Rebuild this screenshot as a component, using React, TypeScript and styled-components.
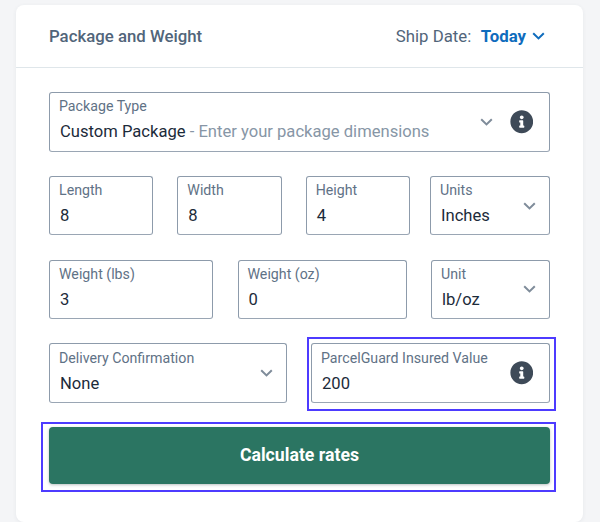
import {FC} from "react";
import styled, {createGlobalStyle} from "styled-components";
import {FaInfoCircle} from "react-icons/fa";

const GlobalStyle = createGlobalStyle`
  html, body {
    margin: 0;
    padding: 0;
    height: 522px;
    overflow: hidden;
    background: #f4f5f7;
    font-family: Roboto, "Liberation Sans", sans-serif;
  }
`;

const Page = styled.div`
  padding: 5px 17px 0 16px;
  height: 517px;
`;

const Card = styled.section`
  height: 516.5px;
  background: #fff;
  border-radius: 8px;
  box-shadow: 0 1px 4px rgba(60, 70, 90, 0.07);
`;

const Header = styled.header`
  height: 62px;
  display: flex;
  align-items: center;
  justify-content: space-between;
  padding: 0 38px 0 33px;
  border-bottom: 1px solid #dfe6ea;
`;

const Title = styled.h2`
  margin: 0;
  font-size: 16.8px;
  font-weight: 500;
  color: #51657a;
`;

const ShipDate = styled.div`
  display: flex;
  align-items: center;
  font-size: 16.8px;
  color: #51657a;
`;

const Today = styled.span`
  display: flex;
  align-items: center;
  gap: 6px;
  margin-left: 9.5px;
  font-weight: 700;
  color: #0f6cbd;
`;

const Form = styled.div`
  display: flex;
  flex-direction: column;
  gap: 24.2px;
  padding: 24.2px 33px 0;
`;

const Row = styled.div<{$columns: string}>`
  display: grid;
  grid-template-columns: ${p => p.$columns};
  justify-content: space-between;
`;

const Dimensions = styled.div`
  width: 361px;
  display: grid;
  grid-template-columns: repeat(3, 1fr);
  column-gap: 24px;
`;

const FieldBox = styled.div<{$highlight?: boolean}>`
  position: relative;
  box-sizing: border-box;
  height: 59.5px;
  display: flex;
  align-items: center;
  justify-content: space-between;
  padding: 0 13px 0 9px;
  border: 1px solid #8d9bab;
  border-bottom-color: #9aa6b4;
  border-radius: 3px;
  background: #fff;

  ${p => p.$highlight && `
    &::after {
      content: "";
      position: absolute;
      top: -7px;
      left: -5px;
      right: -7px;
      bottom: -9px;
      border: 2px solid #4d3bff;
    }
  `}
`;

const FieldText = styled.div`
  min-width: 0;
  padding-bottom: 4px;
  white-space: nowrap;
`;

const FieldLabel = styled.div`
  font-size: 14.2px;
  line-height: 18px;
  margin-bottom: 7px;
  color: #5f7286;
`;

const FieldValue = styled.div`
  font-size: 16.6px;
  line-height: 20px;
  padding-left: 1px;
  color: #1c2b3a;
`;

const Hint = styled.span`
  color: #8796a6;
`;

const Controls = styled.div`
  display: flex;
  align-items: center;
  gap: 17px;
`;

const InfoIcon = styled(FaInfoCircle)`
  width: 23.5px;
  height: 23.5px;
  margin-right: 3px;
  color: #3e4a58;
`;

const CtaWrap = styled.div`
  position: relative;

  &::after {
    content: "";
    position: absolute;
    top: -5px;
    left: -8px;
    right: -6px;
    bottom: -8px;
    border: 2px solid #4d3bff;
    pointer-events: none;
  }
`;

const CalculateButton = styled.button`
  display: block;
  width: 100%;
  height: 57px;
  border: 0;
  border-radius: 4px;
  background: #2b7562;
  box-shadow: 0 1px 3px rgba(30, 50, 50, 0.3);
  color: #fff;
  font-family: inherit;
  font-size: 17.7px;
  font-weight: 700;
`;

const Chevron: FC<{color: string}> = ({color}) => (
  <svg width="13" height="8" viewBox="0 0 13 8" fill="none">
    <path d="M1.2 1.2 6.5 6.4l5.3-5.2" stroke={color} strokeWidth="2" />
  </svg>
);

type FieldProps = {
  label: string;
  value: string;
  hint?: string;
  select?: boolean;
  info?: boolean;
  highlight?: boolean;
};

const Field: FC<FieldProps> = ({label, value, hint, select, info, highlight}) => (
  <FieldBox $highlight={highlight}>
    <FieldText>
      <FieldLabel>{label}</FieldLabel>
      <FieldValue>{value}{hint && <Hint> - {hint}</Hint>}</FieldValue>
    </FieldText>
    {(select || info) && (
      <Controls>
        {select && <Chevron color="#7f8c9a" />}
        {info && <InfoIcon />}
      </Controls>
    )}
  </FieldBox>
);

export default function App() {
  return (
    <Page>
      <GlobalStyle />
      <Card>
        <Header>
          <Title>Package and Weight</Title>
          <ShipDate>
            Ship Date:
            <Today>Today <Chevron color="#0f6cbd" /></Today>
          </ShipDate>
        </Header>
        <Form>
          <Row $columns="1fr">
            <Field label="Package Type" value="Custom Package" hint="Enter your package dimensions" select info />
          </Row>
          <Row $columns="361px 120px">
            <Dimensions>
              <Field label="Length" value="8" />
              <Field label="Width" value="8" />
              <Field label="Height" value="4" />
            </Dimensions>
            <Field label="Units" value="Inches" select />
          </Row>
          <Row $columns="164px 169px 119px">
            <Field label="Weight (lbs)" value="3" />
            <Field label="Weight (oz)" value="0" />
            <Field label="Unit" value="lb/oz" select />
          </Row>
          <Row $columns="238px 239px">
            <Field label="Delivery Confirmation" value="None" select />
            <Field label="ParcelGuard Insured Value" value="200" info highlight />
          </Row>
          <CtaWrap>
            <CalculateButton>Calculate rates</CalculateButton>
          </CtaWrap>
        </Form>
      </Card>
    </Page>
  );
}
